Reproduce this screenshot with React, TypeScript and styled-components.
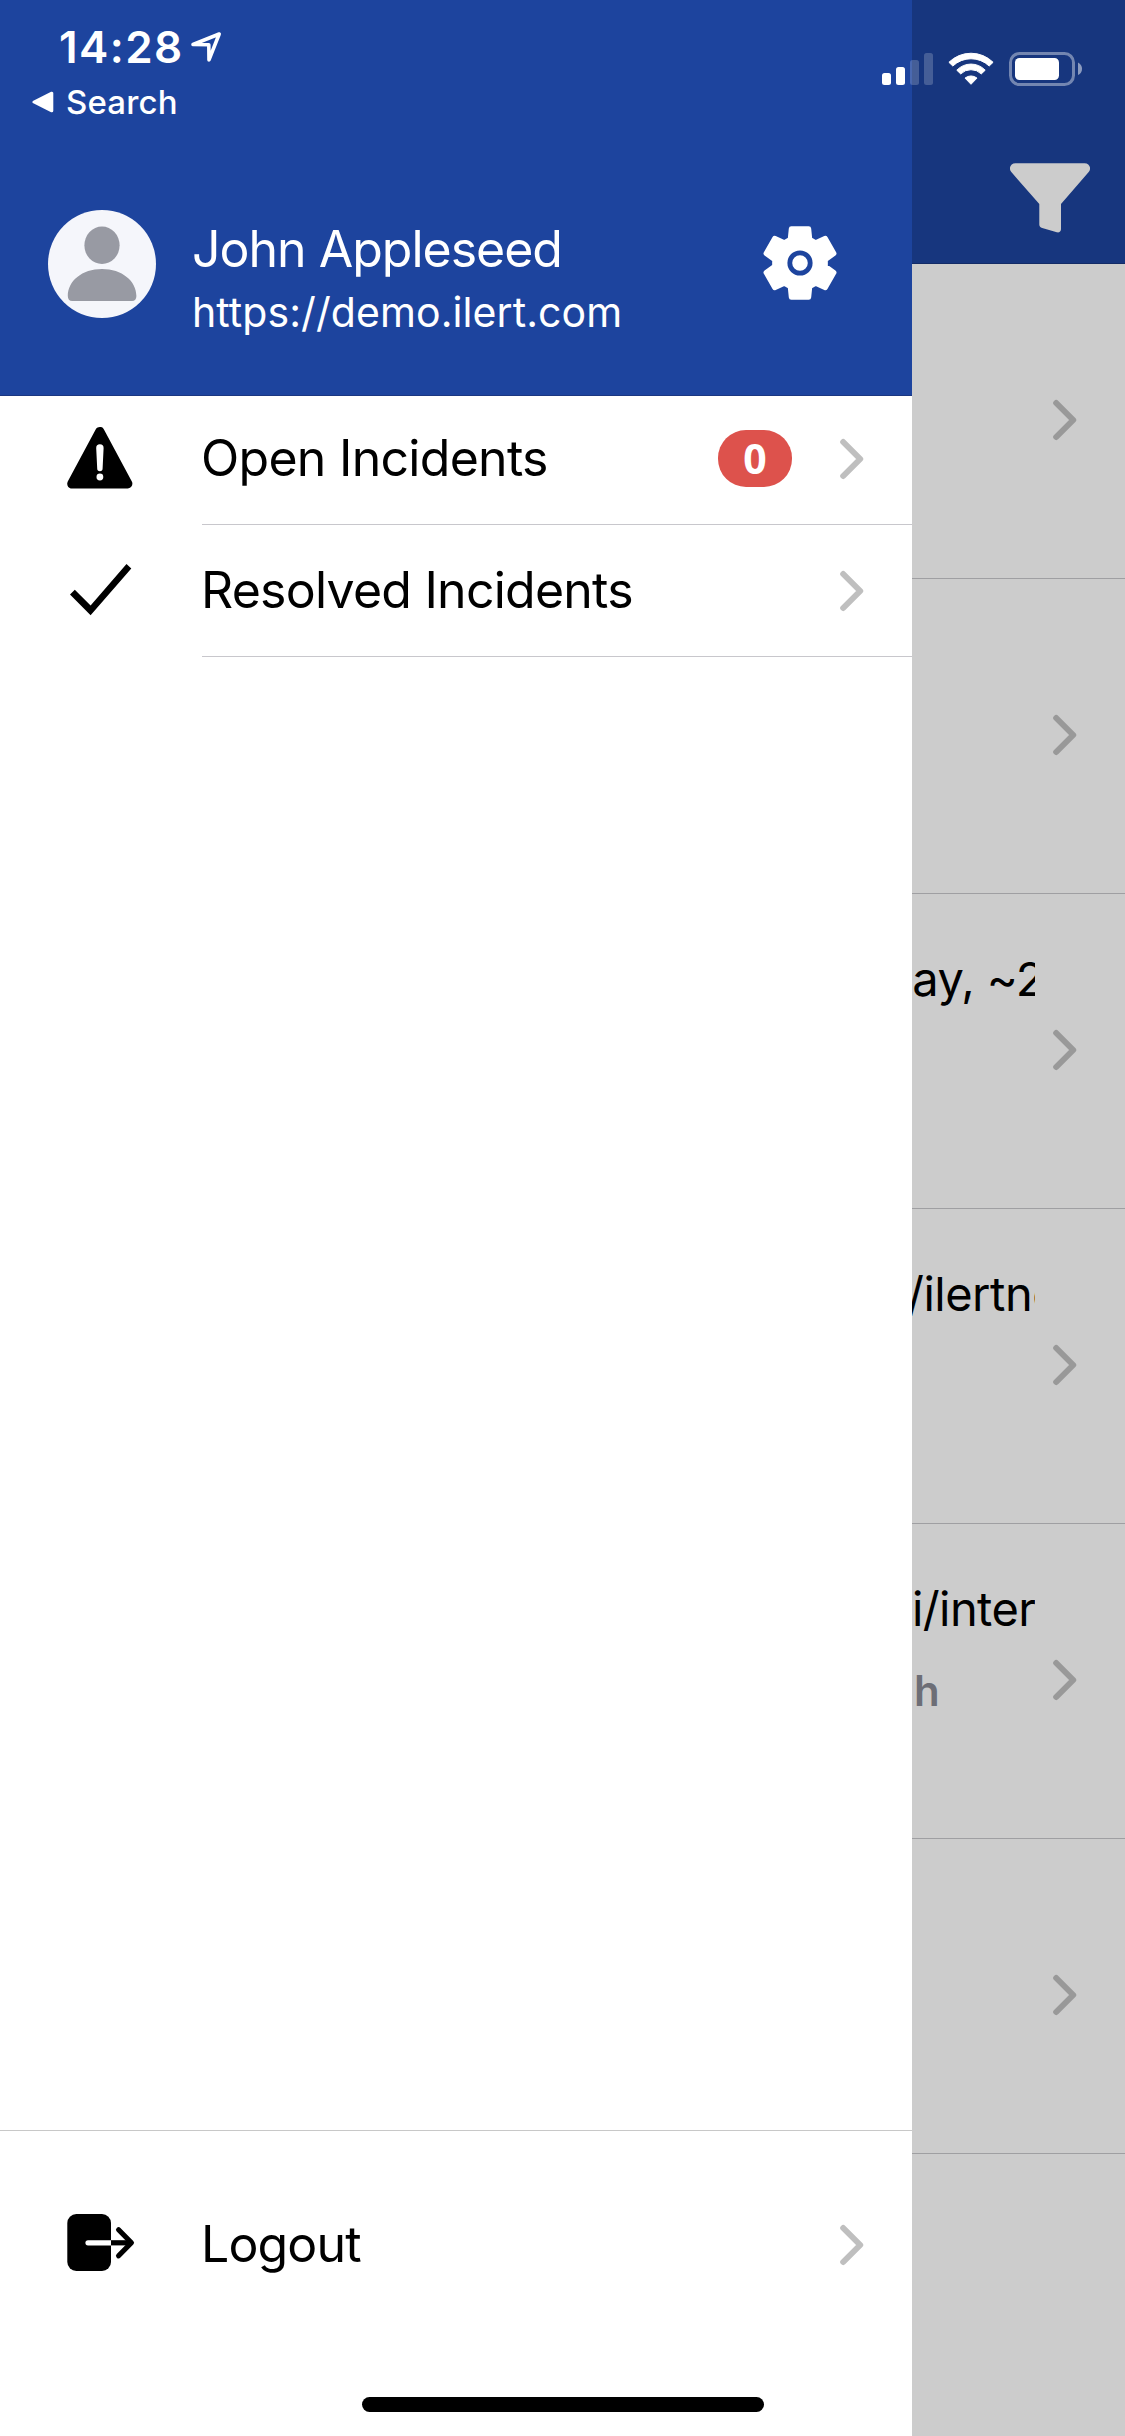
import React from 'react';
import styled, { createGlobalStyle } from 'styled-components';

const font = `Inter, Roboto, "Liberation Sans", sans-serif`;

const GlobalStyle = createGlobalStyle`
  * { box-sizing: border-box; }
  body { margin: 0; background: #cccccc; font-family: ${font}; }
  svg { display: block; flex: none; }
`;

const Screen = styled.div`
  position: relative;
  display: grid;
  grid-template-columns: 912px 213px;
  width: 1125px;
  height: 2436px;
  overflow: hidden;
`;

const Text = styled.span<{ $size: number; $weight?: number; $spacing?: number; $line: number }>`
  font-size: ${p => p.$size}px;
  font-weight: ${p => p.$weight ?? 400};
  letter-spacing: ${p => p.$spacing ?? 0}px;
  line-height: ${p => p.$line}px;
  white-space: nowrap;
`;

/* Drawer */
const Drawer = styled.aside`
  display: flex;
  flex-direction: column;
  background: #ffffff;
`;

const Profile = styled.header`
  display: flex;
  align-items: flex-start;
  height: 396px;
  padding: 210px 74px 0 48px;
  background: #1d449e;
  border-bottom: 1px solid #1b3781;
  color: #ffffff;
`;

const Identity = styled.div`
  display: flex;
  flex: 1;
  flex-direction: column;
  padding: 9px 0 0 36px;
`;

const SettingsButton = styled.button`
  margin-top: 15px;
  padding: 0;
  border: 0;
  background: none;
`;

const Menu = styled.nav`
  display: flex;
  flex: 1;
  flex-direction: column;
  margin-top: -3px;
`;

const MenuRow = styled.a<{ $height: number }>`
  display: flex;
  height: ${p => p.$height}px;
  padding-left: 60px;
  color: #000000;
`;

const IconSlot = styled.span`
  display: flex;
  align-items: center;
  width: 142px;
`;

const RowBody = styled.span<{ $line?: boolean }>`
  display: flex;
  flex: 1;
  align-items: center;
  padding: 1px 47px 0 0;
  border-bottom: ${p => (p.$line ? '1px solid #c8c7cc' : '0')};
`;

const Label = styled(Text)`
  flex: 1;
  margin-left: -1px;
  padding-bottom: 2px;
`;

const Badge = styled.span`
  display: flex;
  align-items: center;
  justify-content: center;
  width: 74px;
  height: 57px;
  margin-right: 47px;
  margin-bottom: 1px;
  border-radius: 28px;
  background: #dd524c;
  color: #ffffff;
  font: 700 41px/57px "Noto Sans", "Open Sans", sans-serif;
`;

const Footer = styled.footer`
  height: 306px;
  border-top: 1px solid #c8c8c8;
`;

/* Page beside the drawer */
const Page = styled.main`
  display: flex;
  flex-direction: column;
  background: #cccccc;
`;

const Toolbar = styled.div`
  display: flex;
  justify-content: flex-end;
  height: 264px;
  padding: 163px 35px 0 0;
  background: #17367e;
  border-bottom: 1px solid #132b66;
`;

const Incident = styled.article`
  display: flex;
  justify-content: space-between;
  height: 315px;
  padding-right: 47px;
  border-bottom: 1px solid #9f9fa2;
`;

const IncidentText = styled.div`
  display: flex;
  flex-direction: column;
  width: 123px;
  padding-top: 55px;
  overflow: hidden;
  color: #000000;
`;

const IncidentTitle = styled(Text)<{ $indent: number }>`
  text-indent: ${p => p.$indent}px;
`;

const IncidentMeta = styled(Text)`
  padding: 19px 0 0 2px;
  color: #6d6e76;
`;

const ChevronSlot = styled.span`
  padding-top: 133px;
`;

/* System overlays */
const StatusBar = styled.div`
  position: absolute;
  inset: 0 0 auto 0;
  display: flex;
  justify-content: space-between;
  padding: 22px 42px 0 32px;
  color: #ffffff;
`;

const StatusLeft = styled.div`
  display: flex;
  flex-direction: column;
`;

const Clock = styled.div`
  display: flex;
  align-items: center;
  gap: 6px;
  padding-left: 27px;
`;

const BackLink = styled.div`
  display: flex;
  align-items: center;
  gap: 11px;
  padding-top: 10px;
`;

const StatusRight = styled.div`
  display: flex;
  gap: 15px;
  padding-top: 30px;
`;

const HomeIndicator = styled.div`
  position: absolute;
  left: 362px;
  bottom: 24px;
  width: 402px;
  height: 15px;
  border-radius: 8px;
  background: #000000;
`;

const Chevron = ({ color }: { color: string }) => (
  <svg width="26" height="46" viewBox="0 0 26 46">
    <path d="M4.2 6 21.2 23 4.2 40" fill="none" stroke={color} strokeWidth="6" strokeLinecap="round" strokeLinejoin="round" />
  </svg>
);

const gearPoints = Array.from({ length: 6 }, (_, k) => {
  const a = (k * Math.PI) / 3;
  return [[-9.8, -23.6], [-8.7, -34.2], [8.7, -34.2], [9.8, -23.6]]
    .map(([x, y]) => `${(x * Math.cos(a) - y * Math.sin(a)).toFixed(2)},${(x * Math.sin(a) + y * Math.cos(a)).toFixed(2)}`)
    .join(' ');
}).join(' ');

const Gear = () => (
  <svg width="76" height="76" viewBox="-38 -38 76 76">
    <polygon points={gearPoints} fill="#fff" stroke="#fff" strokeWidth="5" strokeLinejoin="round" />
    <circle r="10.2" fill="none" stroke="#1d449e" strokeWidth="4.8" />
  </svg>
);

const Avatar = () => (
  <svg width="108" height="108" viewBox="0 0 108 108">
    <circle cx="54" cy="54" r="54" fill="#f5f6fb" />
    <ellipse cx="54" cy="35.3" rx="17.6" ry="18.7" fill="#989aa3" />
    <path d="M19.8 86C19.8 71 34 59 54 59s34.4 12 34.4 27c0 3-1.6 5-4.4 5H24.2c-2.8 0-4.4-2-4.4-5Z" fill="#989aa3" />
  </svg>
);

const Warning = () => (
  <svg width="80" height="80" viewBox="60 419 80 80">
    <path d="M99.8 431.6 71.900 483.800H127.700Z" fill="#000" stroke="#000" strokeWidth="9.400" strokeLinejoin="round" />
    <path d="M96.200 448a3.700 3.700 0 0 1 7.400 0l-1 20.500a2.700 2.700 0 0 1-5.400 0Z" fill="#fff" />
    <circle cx="99.900" cy="477" r="3.400" fill="#fff" />
  </svg>
);

const Check = () => (
  <svg width="80" height="80" viewBox="60 551 80 80">
    <path d="M74.800 589.800 70 594.500 90.600 615.300 131.300 568.600 126.500 564 90.600 605.600Z" fill="#000" />
  </svg>
);

const Exit = () => (
  <svg width="80" height="80" viewBox="60 2204 80 80">
    <rect x="67.300" y="2214" width="43.700" height="57" rx="9" fill="#000" />
    <path d="M111 2240.200H88a2.500 2.500 0 0 0 0 5.200h23Z" fill="#fff" />
    <path d="M111 2242.800h19" fill="none" stroke="#000" strokeWidth="5.200" />
    <path d="M118.600 2229.800l12.800 13-12.800 13" fill="none" stroke="#000" strokeWidth="5.200" strokeLinecap="round" strokeLinejoin="round" />
  </svg>
);

const Funnel = () => (
  <svg width="80" height="70" viewBox="1010 163 80 70">
    <path d="M1015.500 163.300h69c5 0 7.200 5 4.200 8.800L1061 204v25.300c0 2.200-2 3.600-4.200 3l-14.600-4.300c-1.800-.6-2.900-1.800-2.900-3.600V204l-28-31.900c-3-3.800-.8-8.800 4.200-8.800Z" fill="#ccc" />
  </svg>
);

const Location = () => (
  <svg width="32" height="32" viewBox="190 31 32 32">
    <path d="M219.200 34 193 44.500l15.800.2.200 15.200Z" fill="none" stroke="#fff" strokeWidth="3.600" strokeLinejoin="round" />
  </svg>
);

const BackTriangle = () => (
  <svg width="23" height="22" viewBox="0 0 23 22">
    <path d="M2 11 19.800 2.200v17.600Z" fill="#fff" stroke="#fff" strokeWidth="3" strokeLinejoin="round" />
  </svg>
);

const Signal = () => (
  <svg width="51" height="34" viewBox="882 52 51 34">
    <rect x="882" y="73" width="9" height="12" rx="2.500" fill="#fff" />
    <rect x="896" y="67" width="9" height="18" rx="2.500" fill="#fff" />
    <rect x="910" y="60" width="9" height="25" rx="2.500" fill="#fff" fillOpacity=".2" />
    <rect x="924" y="53" width="9" height="32" rx="2.500" fill="#fff" fillOpacity=".2" />
  </svg>
);

const Wifi = () => (
  <svg width="46" height="34" viewBox="948 52 46 34">
    <g fill="#fff" stroke="#fff" strokeWidth="1" strokeLinejoin="round">
      <path d="M948.900 62.300A31.500 31.500 0 0 1 993.100 62.300L989.200 66A26.500 26.500 0 0 0 952.800 66Z" />
      <path d="M956.800 70.200A19.500 19.500 0 0 1 985.200 70.200L981.300 73.900A14.700 14.700 0 0 0 960.700 73.900Z" />
      <path d="M965 78.100A9.500 9.500 0 0 1 977 78.100L971 84.300Z" />
    </g>
  </svg>
);

const Battery = () => (
  <svg width="74" height="34" viewBox="1009 52 74 34">
    <rect x="1010.500" y="53.500" width="63" height="31" rx="9" fill="none" stroke="#fff" strokeOpacity=".4" strokeWidth="3" />
    <rect x="1015" y="58" width="44" height="22" rx="4.500" fill="#fff" />
    <path d="M1078 62.500c5.400 2.400 5.400 10.200 0 12.600Z" fill="#fff" fillOpacity=".5" />
  </svg>
);

interface IncidentItem {
  title?: string;
  indent?: number;
  spacing?: number;
  meta?: string;
}

const incidents: IncidentItem[] = [
  {},
  {},
  { title: 'way, ~2', indent: -37.5, spacing: -0.6 },
  { title: '/ilertne', indent: -5, spacing: -0.5 },
  { title: 'i/inter', indent: 0, spacing: -0.6, meta: 'h' },
  {},
];

export default function App() {
  return (
    <>
      <GlobalStyle />
      <Screen>
        <Drawer>
          <Profile>
            <Avatar />
            <Identity>
              <Text $size={50} $spacing={-1} $line={60}>John Appleseed</Text>
              <Text $size={41} $spacing={0.08} $line={66}>https://demo.ilert.com</Text>
            </Identity>
            <SettingsButton aria-label="Settings"><Gear /></SettingsButton>
          </Profile>
          <Menu>
            <MenuRow $height={132}>
              <IconSlot><Warning /></IconSlot>
              <RowBody $line>
                <Label $size={50} $spacing={-0.72} $line={60}>Open Incidents</Label>
                <Badge>0</Badge>
                <Chevron color="#bfbfbf" />
              </RowBody>
            </MenuRow>
            <MenuRow $height={132}>
              <IconSlot><Check /></IconSlot>
              <RowBody $line>
                <Label $size={50} $spacing={-0.76} $line={60}>Resolved Incidents</Label>
                <Chevron color="#bfbfbf" />
              </RowBody>
            </MenuRow>
          </Menu>
          <Footer>
            <MenuRow $height={226}>
              <IconSlot><Exit /></IconSlot>
              <RowBody>
                <Label $size={50} $spacing={-0.85} $line={60}>Logout</Label>
                <Chevron color="#bfbfbf" />
              </RowBody>
            </MenuRow>
          </Footer>
        </Drawer>
        <Page>
          <Toolbar><Funnel /></Toolbar>
          {incidents.map((item, i) => (
            <Incident key={i}>
              <IncidentText>
                {item.title && (
                  <IncidentTitle $size={47} $spacing={item.spacing} $line={60} $indent={item.indent ?? 0}>
                    {item.title}
                  </IncidentTitle>
                )}
                {item.meta && <IncidentMeta $size={42} $weight={600} $line={66}>{item.meta}</IncidentMeta>}
              </IncidentText>
              <ChevronSlot><Chevron color="#999999" /></ChevronSlot>
            </Incident>
          ))}
        </Page>
        <StatusBar>
          <StatusLeft>
            <Clock>
              <Text $size={44} $weight={560} $spacing={1.4} $line={50}>14:28</Text>
              <Location />
            </Clock>
            <BackLink>
              <BackTriangle />
              <Text $size={33} $weight={460} $spacing={0.15} $line={40}>Search</Text>
            </BackLink>
          </StatusLeft>
          <StatusRight>
            <Signal />
            <Wifi />
            <Battery />
          </StatusRight>
        </StatusBar>
        <HomeIndicator />
      </Screen>
    </>
  );
}
